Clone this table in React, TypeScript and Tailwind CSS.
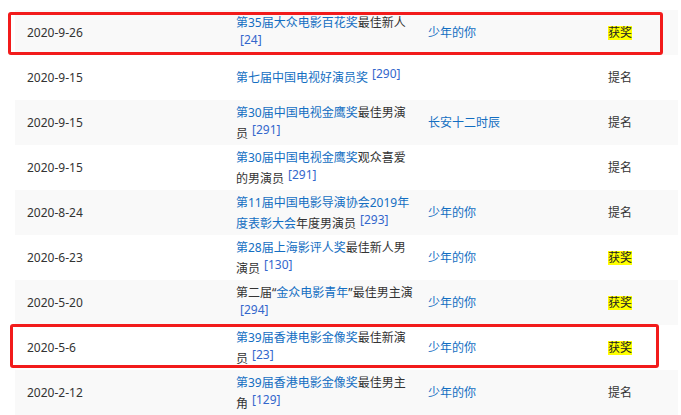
import React from 'react';

type Part = { text: string; link?: boolean };

interface Row {
  date: string;
  award: Part[];
  ref: string;
  work: string;
  result: string;
}

const rows: Row[] = [
  { date: '2020-9-26', award: [{ text: '第35届大众电影百花奖', link: true }, { text: '最佳新人' }], ref: '24', work: '少年的你', result: '获奖' },
  { date: '2020-9-15', award: [{ text: '第七届中国电视好演员奖', link: true }], ref: '290', work: '', result: '提名' },
  { date: '2020-9-15', award: [{ text: '第30届中国电视金鹰奖', link: true }, { text: '最佳男演员' }], ref: '291', work: '长安十二时辰', result: '提名' },
  { date: '2020-9-15', award: [{ text: '第30届中国电视金鹰奖', link: true }, { text: '观众喜爱的男演员' }], ref: '291', work: '', result: '提名' },
  { date: '2020-8-24', award: [{ text: '第11届中国电影导演协会2019年度表彰大会', link: true }, { text: '年度男演员' }], ref: '293', work: '少年的你', result: '提名' },
  { date: '2020-6-23', award: [{ text: '第28届上海影评人奖', link: true }, { text: '最佳新人男演员' }], ref: '130', work: '少年的你', result: '获奖' },
  { date: '2020-5-20', award: [{ text: '第二届“' }, { text: '金众电影青年', link: true }, { text: '”最佳男主演' }], ref: '294', work: '少年的你', result: '获奖' },
  { date: '2020-5-6', award: [{ text: '第39届香港电影金像奖', link: true }, { text: '最佳新演员' }], ref: '23', work: '少年的你', result: '获奖' },
  { date: '2020-2-12', award: [{ text: '第39届香港电影金像奖', link: true }, { text: '最佳男主角' }], ref: '129', work: '少年的你', result: '提名' },
];

const font = { fontFamily: '"Noto Sans", "Noto Sans CJK SC", sans-serif' };

export default function App() {
  return (
    <div className="relative w-[681px] h-[415px] overflow-hidden bg-white pt-[10px] pl-[15px] text-[12px] text-[#333]" style={font}>
      <div className="w-[663px]">
        {rows.map((r, i) => (
          <div key={i} className={`flex items-center h-[45px] ${i % 2 === 0 ? 'bg-[#f9f9f9]' : 'bg-white'}`}>
            <div className="w-[221px] pl-[12px]">{r.date}</div>
            <div className="w-[192px] pr-[14px] leading-[21px]">
              {r.award.map((p, j) => (
                <span key={j} className={p.link ? 'text-[#136ec2]' : ''}>{p.text}</span>
              ))}
              <span className="inline-block relative -top-1 pl-[4px] leading-[14px] text-[#3366cc]">[{r.ref}]</span>
            </div>
            <div className="w-[180px] text-[#136ec2]">{r.work}</div>
            <div className="flex-1">
              {r.result === '获奖' ? (
                <span className="inline-block h-[14px] leading-[14px] bg-[#ffff00] text-[#222]">获奖</span>
              ) : (
                <span>{r.result}</span>
              )}
            </div>
          </div>
        ))}
      </div>
      <div className="absolute left-[8px] top-[12px] w-[655px] h-[43px] border-[3px] border-[#f21b1b] rounded-[3px]" />
      <div className="absolute left-[10px] top-[324px] w-[649px] h-[44px] border-[3px] border-[#f21b1b] rounded-[3px]" />
    </div>
  );
}
